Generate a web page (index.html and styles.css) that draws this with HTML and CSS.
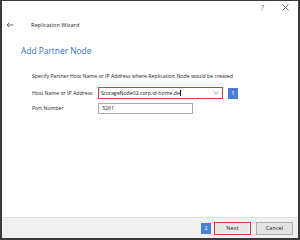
FILE: index.html
```html
<!DOCTYPE html>
<html>
<head>
<meta charset="utf-8">
<link rel="stylesheet" href="styles.css">
</head>
<body>
<div class="frame">
  <div class="topbar">
    <span class="help">?</span>
    <svg class="close" width="7" height="7" viewBox="0 0 7 7"><path d="M0.5 0.5L6.5 6.5M6.5 0.5L0.5 6.5" stroke="#555" stroke-width="0.9"/></svg>
  </div>
  <div class="header">
    <svg class="back" width="8" height="6" viewBox="0 0 8 6"><path d="M7.5 3H1M3.5 0.5L1 3L3.5 5.5" stroke="#444" stroke-width="0.8" fill="none"/></svg>
    <span class="wtitle">Replication Wizard</span>
  </div>
  <div class="content">
    <h1 class="heading">Add Partner Node</h1>
    <p class="desc">Specify Partner Host Name or IP Address where Replication Node would be created</p>
    <div class="form">
      <div class="row">
        <span class="label">Host Name or IP Address</span>
        <div class="combo">
          <span class="val">StorageNode02.corp.id-home.de<span class="caret"></span></span>
          <svg class="chev" width="6" height="4" viewBox="0 0 6 4"><path d="M0.5 0.8L3 3.2L5.5 0.8" stroke="#777" stroke-width="0.8" fill="none"/></svg>
        </div>
        <span class="badge">1</span>
      </div>
      <div class="row">
        <span class="label">Port Number</span>
        <div class="input">3261</div>
      </div>
    </div>
  </div>
  <div class="footer">
    <span class="badge">2</span>
    <button class="btn next">Next</button>
    <button class="btn">Cancel</button>
  </div>
</div>
</body>
</html>
```
FILE: styles.css
```css
* { box-sizing: border-box; }
html, body { margin: 0; padding: 0; background: #fff; }
body { font-family: "Open Sans", "Noto Sans", sans-serif; color: #222; }
.frame {
  width: 300px; height: 240px;
  border: 2px solid #3a3a3a;
  border-top-width: 1px;
  display: flex; flex-direction: column;
  background: #fff;
}
.topbar {
  height: 13px;
  display: flex; align-items: center; justify-content: flex-end;
  gap: 18px; padding-right: 9px;
}
.help { font-size: 7px; color: #555; line-height: 1; }
.header {
  height: 21px;
  display: flex; align-items: center;
  padding-left: 4px;
}
.back { margin-right: 17px; }
.wtitle { font-size: 5.6px; color: #222; }
.content { flex: 1; padding-left: 19px; }
.heading {
  margin: 9px 0 0; font-weight: normal;
  font-size: 8.4px; color: #2f6fc7; line-height: 14px;
}
.desc { margin: 14px 0 0 11px; font-size: 5.2px; line-height: 9px; color: #222; }
.form { margin: 6px 0 0 11px; display: flex; flex-direction: column; gap: 3px; }
.row { display: flex; align-items: center; height: 12px; }
.label { width: 66px; font-size: 5.2px; color: #222; }
.combo {
  width: 125px; height: 12px;
  border: 1px solid #e03a3a;
  display: flex; align-items: center; justify-content: space-between;
  padding: 0 3px 0 2px;
}
.val { font-size: 5.2px; color: #111; display: flex; align-items: center; }
.caret { width: 0.5px; height: 6px; background: #111; }
.chev { display: block; }
.badge {
  width: 10px; height: 11px;
  background: #4a7fd6; color: #fff;
  font-size: 6px; display: flex; align-items: center; justify-content: center;
}
.row .badge { margin-left: 5px; }
.input {
  width: 95px; height: 11px;
  border: 1px solid #aaa;
  font-size: 5.2px; padding-left: 3px;
  display: flex; align-items: center;
}
.footer {
  height: 21px; background: #f0f0f0; border-top: 1px solid #dedede;
  display: flex; align-items: center; justify-content: flex-end;
  padding-right: 5px; gap: 3px;
}
.btn {
  width: 37px; height: 13px; margin: 0;
  font-family: inherit; font-size: 5.6px; color: #222;
  background: #e4e4e4; border: 1px solid #adadad; padding: 0;
}
.btn.next { border: 1px solid #e03a3a; background: #e8e8e8; margin-right: 2px; }
```
